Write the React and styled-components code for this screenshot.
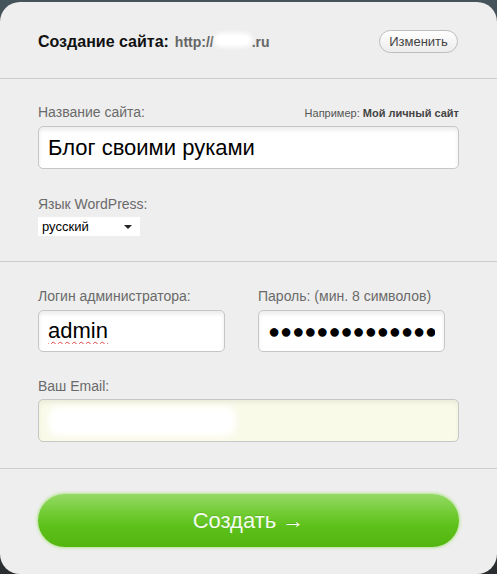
import React from "react";
import styled, { createGlobalStyle } from "styled-components";

const GlobalStyle = createGlobalStyle`
  html, body {
    margin: 0;
    padding: 0;
    background: linear-gradient(#45535a, #2b2e30);
    font-family: "Liberation Sans", Arial, sans-serif;
  }
`;

const Panel = styled.div`
  margin-top: 2px;
  width: 497px;
  height: 572px;
  background: #eeeeee;
  border-radius: 20px;
  overflow: hidden;
  box-sizing: border-box;
`;

const Header = styled.div`
  height: 77px;
  padding: 3px 39px 0 38px;
  box-sizing: border-box;
  display: flex;
  align-items: center;
  justify-content: space-between;
  border-bottom: 1px solid #cdcdcd;
`;

const Title = styled.div`
  font-size: 16px;
  font-weight: bold;
  color: #111;
  display: flex;
  align-items: baseline;
  gap: 6px;
`;

const Url = styled.span`
  font-size: 14px;
  color: #666;
  display: inline-flex;
  align-items: baseline;
`;

const Blur = styled.span`
  display: inline-block;
  width: ${(p) => p.$w}px;
  height: ${(p) => p.$h}px;
  background: #fff;
  border-radius: 10px;
  filter: blur(${(p) => p.$blur || 2}px);
  vertical-align: middle;
`;

const ChangeButton = styled.button`
  width: 79px;
  height: 23px;
  border: 1px solid #bdbdbd;
  border-radius: 12px;
  background: linear-gradient(#ffffff, #ececec);
  font-family: "Liberation Sans", Arial, sans-serif;
  font-size: 13px;
  color: #444;
  padding: 0;
  cursor: pointer;
`;

const Section = styled.div`
  padding: ${(p) => p.$top}px 38px ${(p) => p.$bottom}px 38px;
  border-bottom: 1px solid #cdcdcd;
`;

const LabelRow = styled.div`
  display: flex;
  justify-content: space-between;
  align-items: baseline;
  height: 16px;
  margin-bottom: ${(p) => p.$gap ?? 6}px;
  margin-top: ${(p) => p.$top || 0}px;
`;

const Label = styled.label`
  font-size: 14px;
  line-height: 16px;
  color: #6a6a6a;
`;

const Hint = styled.span`
  font-size: 11px;
  color: #555;

  b {
    color: #444;
  }
`;

const Field = styled.input`
  display: block;
  box-sizing: border-box;
  width: 100%;
  height: ${(p) => p.$h || 43}px;
  padding: 0 9px;
  border: 1px solid #c6c6c6;
  border-radius: 5px;
  background: #fff;
  box-shadow: inset 0 3px 4px rgba(0, 0, 0, 0.08);
  font-family: "Liberation Sans", Arial, sans-serif;
  font-size: ${(p) => p.$size || 22}px;
  color: #000;
  outline: none;
  text-decoration: ${(p) => (p.$spell ? "underline wavy #e04040 1px" : "none")};
  text-underline-offset: 3px;
`;

const EmailBox = styled.div`
  height: 43px;
  box-sizing: border-box;
  border: 1px solid #c6c6c6;
  border-radius: 5px;
  background: #f9fae8;
  box-shadow: inset 0 3px 4px rgba(0, 0, 0, 0.06);
  display: flex;
  align-items: center;
  padding-left: 9px;
`;

const Select = styled.div`
  width: 102px;
  height: 19px;
  background: #fff;
  box-sizing: border-box;
  display: flex;
  align-items: center;
  justify-content: space-between;
  padding: 0 8px 0 4px;
  font-size: 13px;
  color: #000;
`;

const Caret = styled.span`
  width: 0;
  height: 0;
  border-left: 4px solid transparent;
  border-right: 4px solid transparent;
  border-top: 4px solid #222;
`;

const Columns = styled.div`
  display: grid;
  grid-template-columns: 187px 187px;
  column-gap: 33px;
`;

const Column = styled.div``;

const Footer = styled.div`
  padding: 25px 38px 0 38px;
`;

const CreateButton = styled.button`
  width: 100%;
  height: 53px;
  border: none;
  border-radius: 27px;
  background: linear-gradient(#95da66 0%, #72cc34 35%, #5ec11b 60%, #53b60f 100%);
  box-shadow: 0 0 3px 1px #b3e48e;
  font-family: "Liberation Sans", Arial, sans-serif;
  font-size: 22px;
  color: #f4fbef;
  text-shadow: 0 -1px 0 rgba(0, 0, 0, 0.1);
  cursor: pointer;
`;

export default function App() {
  return (
    <>
      <GlobalStyle />
      <Panel>
        <Header>
          <Title>
            Создание сайта:
            <Url>
              http://
              <Blur $w={38} $h={14} />
              .ru
            </Url>
          </Title>
          <ChangeButton>Изменить</ChangeButton>
        </Header>

        <Section $top={25} $bottom={25}>
          <LabelRow>
            <Label>Название сайта:</Label>
            <Hint>
              Например: <b>Мой личный сайт</b>
            </Hint>
          </LabelRow>
          <Field readOnly defaultValue="Блог своими руками" />
          <LabelRow $top={27} $gap={5}>
            <Label>Язык WordPress:</Label>
          </LabelRow>
          <Select>
            русский
            <Caret />
          </Select>
        </Section>

        <Section $top={26} $bottom={26}>
          <Columns>
            <Column>
              <LabelRow>
                <Label>Логин администратора:</Label>
              </LabelRow>
              <Field readOnly defaultValue="admin" $h={42} $spell />
            </Column>
            <Column>
              <LabelRow>
                <Label>Пароль: (мин. 8 символов)</Label>
              </LabelRow>
              <Field readOnly defaultValue="●●●●●●●●●●●●●●" $h={42} $size={20} />
            </Column>
          </Columns>
          <LabelRow $top={26} $gap={5}>
            <Label>Ваш Email:</Label>
          </LabelRow>
          <EmailBox>
            <Blur $w={188} $h={30} $blur={3} />
          </EmailBox>
        </Section>

        <Footer>
          <CreateButton>Создать →</CreateButton>
        </Footer>
      </Panel>
    </>
  );
}
